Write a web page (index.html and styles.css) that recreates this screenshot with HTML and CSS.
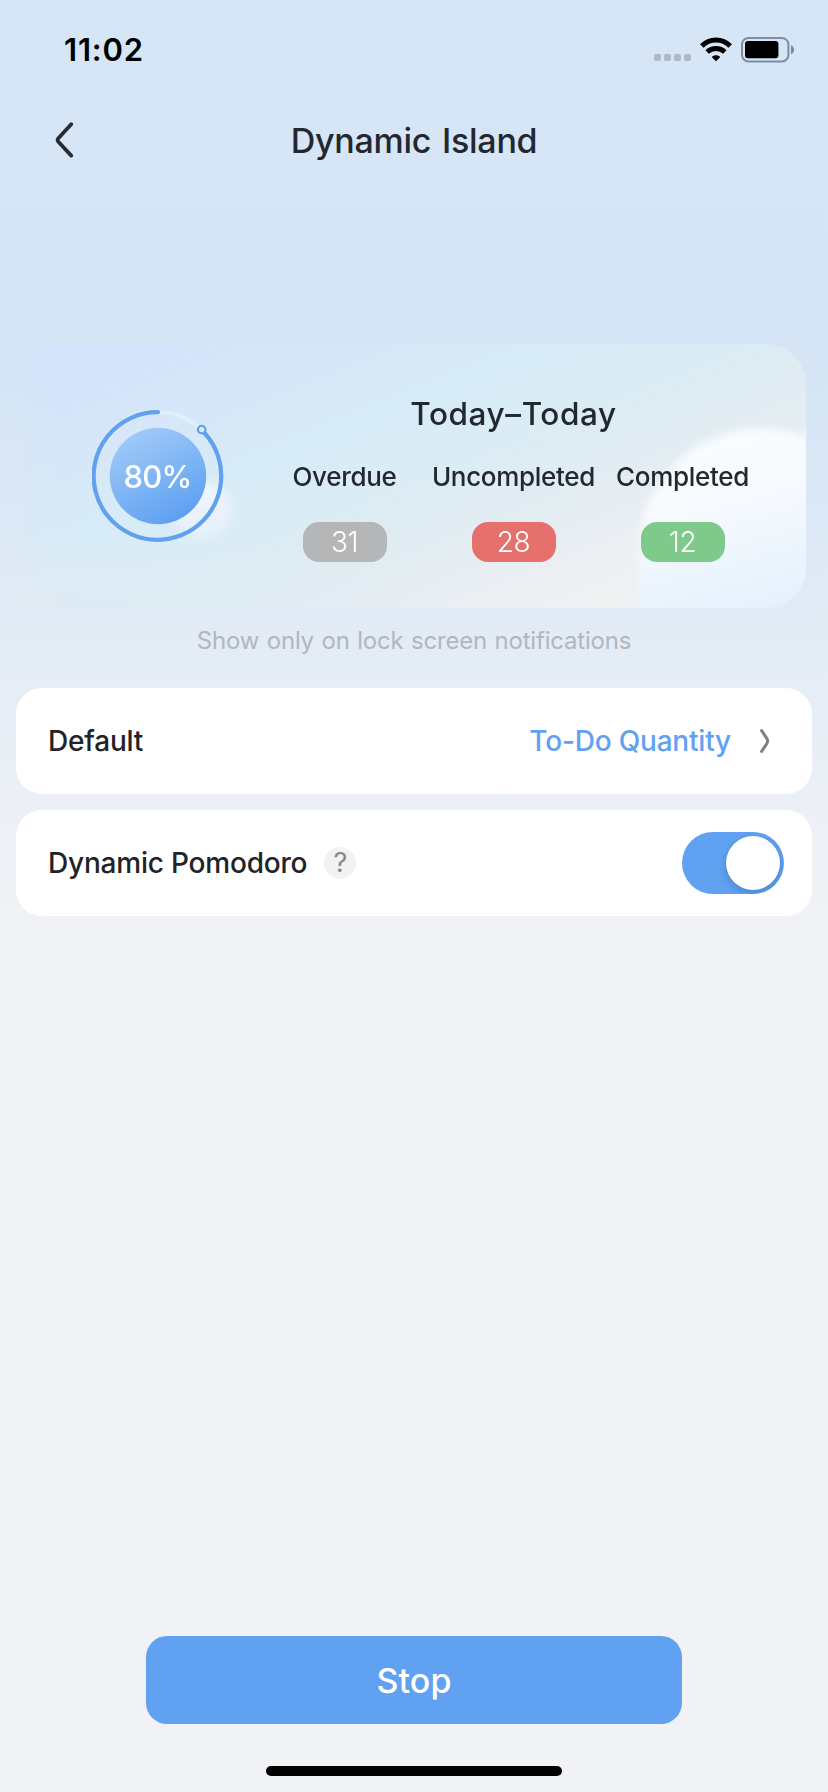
FILE: index.html
```
<!DOCTYPE html>
<html lang="en">
<head>
<meta charset="utf-8">
<title>Dynamic Island</title>
<link rel="stylesheet" href="styles.css">
</head>
<body>
<div class="screen">
  <header class="status">
    <span class="time">11:02</span>
    <div class="signal"><i></i><i></i><i></i><i></i></div>
    <svg class="wifi" width="32" height="25" viewBox="0 0 32 25">
      <g fill="none" stroke="#000" stroke-width="5">
        <path d="M1.8 9C9.6 1 22.4 1 30.2 9"/>
        <path d="M7.2 15C12.2 10.3 19.8 10.3 24.8 15"/>
      </g>
      <path d="M11.7 20C14.3 17.5 17.7 17.5 20.3 20L16 24.3Z"/>
    </svg>
    <svg class="battery" width="54" height="26" viewBox="0 0 54 26">
      <rect x="1" y="1" width="46.4" height="23.4" rx="6.5" fill="none" stroke="#7e8ca0" stroke-width="2"/>
      <rect x="4" y="4" width="33.4" height="17.2" rx="3"/>
      <path d="M50 8.2C54.2 9.6 54.2 15.8 50 17.2Z" fill="#7e8ca0"/>
    </svg>
  </header>
  <nav class="nav">
    <svg class="back" width="20" height="38" viewBox="0 0 20 38"><path d="M16.2 3.2L3.4 17.2Q1.9 19 3.4 20.8L16.2 34.6" fill="none" stroke="#2a2b30" stroke-width="3.8" stroke-linecap="round" stroke-linejoin="round"/></svg>
    <h1 class="title">Dynamic Island</h1>
  </nav>
  <section class="card">
    <div class="bubble"></div>
    <div class="glow"></div>
    <div class="ring">
      <svg width="132" height="132" viewBox="0 0 132 132">
        <defs><linearGradient id="disc" x1=".2" y1=".05" x2=".7" y2="1"><stop offset="0" stop-color="#a2caf8"/><stop offset="1" stop-color="#5b9ff1"/></linearGradient></defs>
        <circle cx="66" cy="66" r="48.2" fill="url(#disc)"/>
        <path d="M66 2.2A63.8 63.8 0 0 1 110 20" fill="none" stroke="#e2effb" stroke-width="4"/>
        <path d="M112.3 22.7A63.8 63.8 0 1 1 66 2.2" fill="none" stroke="#60a2ef" stroke-width="4.2" stroke-linecap="round"/>
        <circle cx="109.7" cy="19.6" r="3.8" fill="#dcecf9" stroke="#60a2ef" stroke-width="2.2"/>
      </svg>
      <span class="percent">80%</span>
    </div>
    <div class="stats">
      <h2 class="range">Today–Today</h2>
      <div class="cols">
        <div class="col"><span class="label">Overdue</span><span class="pill grey">31</span></div>
        <div class="col"><span class="label">Uncompleted</span><span class="pill red">28</span></div>
        <div class="col"><span class="label">Completed</span><span class="pill green">12</span></div>
      </div>
    </div>
  </section>
  <p class="caption">Show only on lock screen notifications</p>
  <div class="row">
    <span class="name">Default</span>
    <span class="value">To-Do Quantity</span>
    <svg class="more" width="12" height="26" viewBox="0 0 12 26"><path d="M2.6 2.6L7.8 10.4Q9.4 13 7.8 15.6L2.6 23.4" fill="none" stroke="#808080" stroke-width="3" stroke-linecap="round"/></svg>
  </div>
  <div class="row">
    <span class="name">Dynamic Pomodoro</span>
    <span class="help">?</span>
    <div class="toggle"><div class="knob"></div></div>
  </div>
  <footer class="bottom">
    <button class="stop">Stop</button>
    <div class="home"></div>
  </footer>
</div>
</body>
</html>
```
FILE: styles.css
```
* { box-sizing: border-box; }
body { margin: 0; font-family: Inter, "Liberation Sans", sans-serif; color: #23272f; }
h1, h2, p { margin: 0; font-weight: 500; }
svg { display: block; flex: none; }
span { white-space: nowrap; }
.screen {
  width: 828px; height: 1792px; overflow: hidden;
  display: flex; flex-direction: column;
  background: linear-gradient(180deg, #d6e6f6 0, #d5e5f5 370px, #dbe8f6 500px, #e3ecf5 640px, #ebeff6 780px, #f0f2f5 920px, #f0f2f5 100%);
}
.status { height: 100px; display: flex; align-items: flex-start; padding: 37px 33px 0 64px; }
.time { flex: 1; color: #000; font-size: 31px; font-weight: 600; line-height: 26px; letter-spacing: .8px; }
.signal { display: flex; gap: 3px; margin: 17px 9px 0 0; }
.signal i { width: 7px; height: 7px; border-radius: 2px; background: #abb9c8; }
.battery { margin-left: 9px; }
.nav { height: 80px; display: grid; grid-template-columns: 55px 1fr 55px; align-items: center; }
.back { margin-left: 55px; }
.title { text-align: center; font-size: 34px; font-weight: 450; line-height: 40px; word-spacing: 2px; letter-spacing: -.25px; padding-top: 1px; }
.card {
  position: relative; overflow: hidden; flex: none;
  height: 264px; margin: 164px 22px 0 24px; border-radius: 0 40px 40px 0;
  display: flex;
  background:
    radial-gradient(ellipse 420px 70px at 0 100%, #dfebf4 20%, rgba(223,235,244,0) 100%),
    linear-gradient(158deg, #d4e4fa 10%, #d6e8f8 25%, #d8ecf7 42%, #e0ecf2 60%, #ebeff3 76%, #f2f2f1 90%);
  -webkit-mask-image: linear-gradient(90deg, rgba(0,0,0,.35) 0, #000 30px);
  mask-image: linear-gradient(90deg, rgba(0,0,0,.35) 0, #000 30px);
}
.bubble {
  position: absolute; left: 614px; top: 84px; width: 248px; height: 290px; border-radius: 124px;
  background: linear-gradient(165deg, #fbfdfe 0, #f6fafe 28%, #e4f1fd 60%);
  filter: blur(4px);
}
.glow {
  position: absolute; left: 151px; top: 138px; width: 58px; height: 58px; border-radius: 50%;
  background: linear-gradient(160deg, #f2f8fe, #e2eefb); filter: blur(6px);
}
.ring { position: relative; width: 132px; height: 132px; margin: 66px 0 0 68px; flex: none; }
.percent {
  position: absolute; inset: 0; text-align: center; line-height: 134px; padding-right: 1px;
  color: #fff; font-size: 31px; font-weight: 500; letter-spacing: -.8px;
}
.stats { position: relative; margin: 50px 0 0 36px; width: 507px; flex: none; }
.range { font-size: 31.5px; line-height: 40px; text-align: center; font-weight: 460; letter-spacing: .6px; }
.cols { display: grid; grid-template-columns: repeat(3, 169px); margin-top: 25px; }
.col { display: flex; flex-direction: column; align-items: center; gap: 27px; }
.label { font-size: 26px; line-height: 36px; font-weight: 460; letter-spacing: -.3px; }
.pill {
  width: 84px; height: 40px; border-radius: 16px; color: #fff; text-align: center;
  font-size: 28px; font-weight: 320; line-height: 40px; letter-spacing: -.4px;
}
.grey { background: #b5b6b7; }
.red { background: #e5706c; }
.green { background: #7fc98b; }
.caption {
  height: 80px; line-height: 65px; text-align: center; flex: none;
  color: #b1b6bf; font-size: 24px; font-weight: 400; letter-spacing: -.2px; word-spacing: 1px;
}
.row {
  flex: none; height: 106px; margin: 0 16px 16px; border-radius: 26px; background: #fff;
  display: flex; align-items: center; padding: 0 28px 0 32px;
}
.name { font-size: 28px; font-weight: 460; color: #222326; letter-spacing: -.2px; }
.value { margin-left: auto; color: #61a1f0; font-size: 28px; font-weight: 450; letter-spacing: -.2px; }
.more { margin: 0 13px 0 28px; }
.help {
  width: 32px; height: 32px; margin-left: 17px; border-radius: 50%; background: #f2f2f2;
  color: #888; font-size: 27px; line-height: 32px; text-align: center;
}
.toggle {
  width: 102px; height: 62px; margin-left: auto; border-radius: 31px; padding: 4px;
  background: #60a2f1; display: flex; justify-content: flex-end; overflow: hidden;
}
.knob { width: 54px; height: 54px; border-radius: 50%; background: #fff; box-shadow: 0 3px 8px rgba(0,40,100,.25); }
.bottom { margin-top: auto; height: 156px; display: flex; flex-direction: column; align-items: center; gap: 42px; flex: none; }
.stop {
  width: 536px; height: 88px; border: 0; padding: 1px 0 0; border-radius: 21px; background: #60a2f1;
  color: #fff; font: 450 34px/87px Inter, sans-serif; letter-spacing: .1px;
}
.home { width: 296px; height: 10px; border-radius: 5px; background: #000; }
```
